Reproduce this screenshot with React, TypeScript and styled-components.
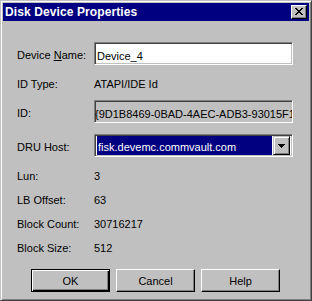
import styled, { createGlobalStyle } from "styled-components";

const GlobalStyle = createGlobalStyle`
  html, body {
    margin: 0;
    padding: 0;
    background: #c0c0c0;
  }
  body {
    font-family: "Liberation Sans", Arial, sans-serif;
    font-size: 11px;
    color: #000;
  }
`;

const Window = styled.div`
  box-sizing: border-box;
  width: 312px;
  height: 301px;
  background: #c0c0c0;
  border: 1px solid;
  border-color: #c0c0c0 #404040 #404040 #c0c0c0;
  box-shadow: inset 1px 1px #ffffff, inset -1px -1px #808080;
  padding: 2px;
  display: flex;
  flex-direction: column;
`;

const TitleBar = styled.div`
  height: 18px;
  background: #000080;
  display: flex;
  align-items: center;
  justify-content: space-between;
  padding: 0 2px 0 2px;
`;

const Title = styled.span`
  color: #fff;
  font-weight: bold;
  font-size: 12px;
  letter-spacing: 0.1px;
`;

const CloseButton = styled.div`
  box-sizing: border-box;
  width: 16px;
  height: 14px;
  background: #c0c0c0;
  border: 1px solid;
  border-color: #ffffff #000000 #000000 #ffffff;
  box-shadow: inset -1px -1px #808080;
  display: flex;
  align-items: center;
  justify-content: center;
  padding: 0 1px 1px 0;
`;

const Body = styled.div`
  padding: 21px 0 0 14px;
  display: flex;
  flex-direction: column;
`;

const Row = styled.div<{ $h: number; $mt: number }>`
  display: flex;
  align-items: center;
  height: ${(p) => p.$h}px;
  margin-top: ${(p) => p.$mt}px;
`;

const Label = styled.div`
  width: 77px;
  flex: none;
  padding-top: 2px;
`;

const Value = styled.div`
  padding-top: 2px;
`;

const Sunken = styled.div<{ $bg: string }>`
  box-sizing: border-box;
  width: 199px;
  height: 23px;
  background: ${(p) => p.$bg};
  border: 1px solid;
  border-color: #808080 #ffffff #ffffff #808080;
  box-shadow: inset 1px 1px #404040, inset -1px -1px #c0c0c0;
  display: flex;
  align-items: center;
  overflow: hidden;
  white-space: nowrap;
`;

const FieldText = styled.span<{ $indent: number }>`
  padding-left: ${(p) => p.$indent}px;
  padding-top: 4px;
`;

const Highlight = styled.div`
  flex: 1;
  height: 19px;
  margin: 0 0 0 2px;
  background: #000080;
  color: #fff;
  display: flex;
  align-items: center;
  padding: 3px 0 0 1px;
  box-sizing: border-box;
`;

const DropButton = styled.div`
  box-sizing: border-box;
  width: 17px;
  height: 19px;
  margin: 0 2px 0 1px;
  background: #c0c0c0;
  border: 1px solid;
  border-color: #c0c0c0 #000000 #000000 #c0c0c0;
  box-shadow: inset 1px 1px #ffffff, inset -1px -1px #808080;
  display: flex;
  align-items: center;
  justify-content: center;
`;

const ButtonRow = styled.div`
  display: flex;
  gap: 6px;
  margin: 10px 0 0 14px;
`;

const Button = styled.div<{ $default?: boolean }>`
  box-sizing: border-box;
  width: 79px;
  height: 23px;
  background: #c0c0c0;
  display: flex;
  align-items: center;
  justify-content: center;
  padding-top: 1px;
  border: 1px solid;
  border-color: ${(p) =>
    p.$default ? "#000000" : "#ffffff #000000 #000000 #ffffff"};
  box-shadow: ${(p) =>
    p.$default
      ? "inset 1px 1px #ffffff, inset -1px -1px #000000, inset -2px -2px #808080"
      : "inset -1px -1px #808080"};
`;

const rows: [string, string][] = [
  ["Lun:", "3"],
  ["LB Offset:", "63"],
  ["Block Count:", "30716217"],
  ["Block Size:", "512"],
];

export default function App() {
  return (
    <>
      <GlobalStyle />
      <Window>
        <TitleBar>
          <Title>Disk Device Properties</Title>
          <CloseButton>
            <svg width="8" height="7" viewBox="0 0 8 7">
              <path
                d="M0 0h2v1h1v1h2v-1h1v-1h2v1h-1v1h-1v1h-1v1h1v1h1v1h1v1h-2v-1h-1v-1h-2v1h-1v1h-2v-1h1v-1h1v-1h1v-1h-1v-1h-1v-1h-1z"
                fill="#000"
              />
            </svg>
          </CloseButton>
        </TitleBar>
        <Body>
          <Row $h={23} $mt={0}>
            <Label>
              Device <u>N</u>ame:
            </Label>
            <Sunken $bg="#ffffff">
              <FieldText $indent={2}>Device_4</FieldText>
            </Sunken>
          </Row>
          <Row $h={24} $mt={6}>
            <Label>ID Type:</Label>
            <Value>ATAPI/IDE Id</Value>
          </Row>
          <Row $h={23} $mt={5}>
            <Label>ID:</Label>
            <Sunken $bg="#c0c0c0">
              <FieldText $indent={0}>{"{9D1B8469-0BAD-4AEC-ADB3-93015F1D"}</FieldText>
            </Sunken>
          </Row>
          <Row $h={23} $mt={11}>
            <Label>DRU Host:</Label>
            <Sunken $bg="#ffffff">
              <Highlight>fisk.devemc.commvault.com</Highlight>
              <DropButton>
                <svg width="7" height="4" viewBox="0 0 7 4">
                  <path d="M0 0h7v1h-1v1h-1v1h-1v1h-1v-1h-1v-1h-1v-1h-1z" fill="#000" />
                </svg>
              </DropButton>
            </Sunken>
          </Row>
          {rows.map(([l, v], i) => (
            <Row key={l} $h={24} $mt={i === 0 ? 6 : 0}>
              <Label>{l}</Label>
              <Value>{v}</Value>
            </Row>
          ))}
          <ButtonRow>
            <Button $default>OK</Button>
            <Button>Cancel</Button>
            <Button>Help</Button>
          </ButtonRow>
        </Body>
      </Window>
    </>
  );
}
